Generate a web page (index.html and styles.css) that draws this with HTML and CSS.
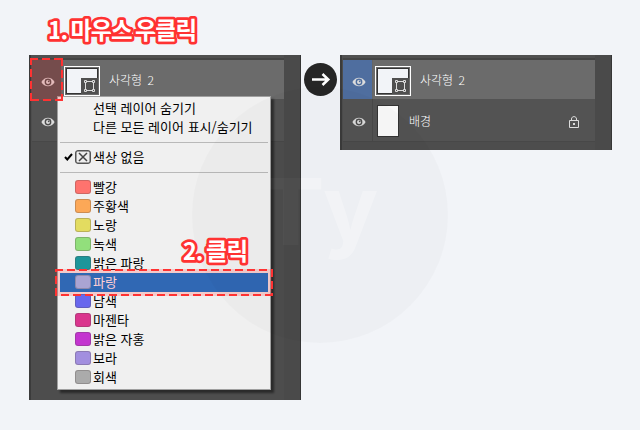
FILE: index.html
```html
<!DOCTYPE html>
<html lang="ko">
	<head>
		<meta charset="utf-8">
		<title>레이어 색상</title>
		<link rel="stylesheet" href="styles.css">
	</head>
	<body>
		<svg class="symbols" width="0" height="0">
			<symbol id="eye" viewBox="0 0 14 10">
				<path d="M0.4 5C3.4-.8 10.6-.8 13.6 5C10.6 10.8 3.4 10.8.4 5Z" fill="#dcdcdc"/>
				<circle cx="7" cy="5" r="3.4" fill="var(--pupil)"/>
				<circle cx="7" cy="5" r="2" fill="#dcdcdc"/>
				<circle cx="7.7" cy="4.3" r=".9" fill="var(--pupil)"/>
			</symbol>
			<symbol id="shape" viewBox="0 0 17 16">
				<path d="M0 0H17V16H0Z" fill="#505050"/>
				<path d="M4.5 5V11M12.5 5V11M6 3.5H11M6 12.5H11M3.5 2.5h2v2h-2zM11.5 2.5h2v2h-2zM3.5 11.5h2v2h-2zM11.5 11.5h2v2h-2z" fill="none" stroke="#ddd"/>
			</symbol>
		</svg>

		<div class="container">
			<!-- 왼쪽 패널 -->
			<div class="panel panel-left">
				<div class="list">
					<div class="layer active">
						<div class="eye"><svg width="14" height="10"><use href="#eye"/></svg></div>
						<div class="thumb"><svg width="17" height="16"><use href="#shape"/></svg></div>
						<span class="name">사각형 2</span>
					</div>
					<div class="layer">
						<div class="eye"><svg width="14" height="10"><use href="#eye"/></svg></div>
					</div>
				</div>
				<div class="scroll"></div>
			</div>

			<svg class="arrow" width="33" height="33" viewBox="0 0 33 33">
				<circle cx="16.5" cy="16.5" r="16.5" fill="#262626"/>
				<path d="M8 16.5H24M18.5 11L24.3 16.5L18.5 22" fill="none" stroke="#fff" stroke-width="2.5"/>
			</svg>

			<!-- 오른쪽 패널 -->
			<div class="panel panel-right">
				<div class="list">
					<div class="layer active blue">
						<div class="eye"><svg width="14" height="10"><use href="#eye"/></svg></div>
						<div class="thumb"><svg width="17" height="16"><use href="#shape"/></svg></div>
						<span class="name">사각형 2</span>
					</div>
					<div class="layer">
						<div class="eye"><svg width="14" height="10"><use href="#eye"/></svg></div>
						<div class="thumb-bg"></div>
						<span class="name">배경</span>
						<svg class="lock" width="10" height="12" viewBox="0 0 10 12">
							<path d="M.5 4.5H9.5V11.5H.5ZM2.5 4.5V3C2.5-.2 7.5-.2 7.5 3V4.5" fill="none" stroke="#ddd"/>
							<path d="M4 7H6V9H4Z" fill="#ddd"/>
						</svg>
					</div>
				</div>
				<div class="scroll"></div>
			</div>
		</div>

		<!-- 우클릭 메뉴 -->
		<div class="menu">
			<div class="item"><span>선택 레이어 숨기기</span></div>
			<div class="item"><span>다른 모든 레이어 표시/숨기기</span></div>
			<div class="line"></div>
			<div class="item">
				<svg class="check" width="9" height="8" viewBox="0 0 9 8"><path d="M1 4L3.3 6.5L8 1" fill="none" stroke="#000" stroke-width="2"/></svg>
				<svg class="none" width="16" height="14" viewBox="0 0 16 14">
					<rect x=".75" y=".75" width="14.5" height="12.5" rx="2" fill="#eee" stroke="#555" stroke-width="1.5"/>
					<path d="M4 3L12 11M12 3L4 11" stroke="#444" stroke-width="1.5"/>
				</svg>
				<span>색상 없음</span>
			</div>
			<div class="line"></div>
			<div class="item"><i class="color red"></i><span>빨강</span></div>
			<div class="item"><i class="color orange"></i><span>주황색</span></div>
			<div class="item"><i class="color yellow"></i><span>노랑</span></div>
			<div class="item"><i class="color green"></i><span>녹색</span></div>
			<div class="item"><i class="color teal"></i><span>밝은 파랑</span></div>
			<div class="item selected"><i class="color pale"></i><span>파랑</span></div>
			<div class="item"><i class="color indigo"></i><span>남색</span></div>
			<div class="item"><i class="color magenta"></i><span>마젠타</span></div>
			<div class="item"><i class="color fuchsia"></i><span>밝은 자홍</span></div>
			<div class="item"><i class="color violet"></i><span>보라</span></div>
			<div class="item"><i class="color gray"></i><span>회색</span></div>
		</div>

		<!-- 워터마크 -->
		<div class="mark"><span class="mark-t">T</span><span class="mark-y">y</span></div>

		<!-- 설명 표시 -->
		<svg class="guide" width="640" height="430">
			<rect x="31" y="59" width="31" height="41" fill="#ff3232" fill-opacity=".2"/>
			<path d="M30 59H63M62 58V101M63 100H30M31 101V58" class="dash"/>
			<path d="M55 270H273M272 269V296M273 295H55M56 296V269" class="dash"/>
			<text class="step" x="48" y="39" textLength="149">1. 마우스 우클릭</text>
			<text class="step" x="183" y="260" textLength="65">2. 클릭</text>
		</svg>
	</body>
</html>
```
FILE: styles.css
```css
* {
	margin: 0;
	padding: 0;
	box-sizing: border-box;
}
body {
	width: 640px;
	height: 430px;
	position: relative;
	overflow: hidden;
	background: #f2f4f8;
	font-family: "Noto Sans CJK KR", sans-serif;
}
svg {
	display: block;
	flex: none;
}
.symbols {
	position: absolute;
}
.container {
	display: flex;
	align-items: flex-start;
	padding: 55px 28px 0 29px;
}
.panel {
	width: 272px;
	display: flex;
	background: #4d4d4d;
	border-left: 2px solid #3b3b3b;
	border-right: 1px solid #363636;
}
.panel-left {
	height: 345px;
}
.panel-right {
	height: 95px;
}
.list {
	width: 253px;
	border-top: 3px solid #505050;
	padding-left: 1px;
}
.scroll {
	flex: 1;
	background: #4a4a4a;
}
.layer {
	height: 43px;
	display: flex;
	align-items: center;
	background: #535353;
	border-bottom: 1px solid #484848;
	--pupil: #4d4d4d;
}
.layer.active {
	height: 41px;
	background: #6b6b6b;
	border-top: 2px solid #444;
	border-bottom: 0;
}
.eye {
	width: 30px;
	height: 100%;
	display: flex;
	align-items: center;
	padding-left: 9px;
	padding-top: 4px;
	border-right: 1px solid #494949;
	background: #535353;
}
.active .eye {
	border-right-color: #666;
}
.blue .eye {
	background: #4f6e9f;
	--pupil: #4f6e9f;
}
.thumb {
	width: 36px;
	height: 30px;
	margin: 2px 9px 0 2px;
	padding: 1px;
	display: flex;
	justify-content: flex-end;
	align-items: flex-end;
	border: 1px solid #fff;
	background: #f2f4f8;
	box-shadow: inset 0 0 0 1px #6b6b6b, inset 0 0 0 2px #333;
}
.thumb-bg {
	width: 22px;
	height: 32px;
	margin: 2px 10px 0 4px;
	border: 1px solid #333;
	background: #fafafa;
}
.name {
	flex: 1;
	padding-top: 1px;
	font-size: 12px;
	font-weight: 300;
	line-height: 18px;
	color: #fff;
	word-spacing: 2px;
}
.lock {
	margin: 4px 16px 0 0;
}
.arrow {
	margin: 8px 3px 0;
}
.menu {
	position: absolute;
	left: 57px;
	top: 96px;
	width: 214px;
	height: 294px;
	padding: 2px;
	border: 1px solid #a0a0a0;
	background: #f0f0f0;
	box-shadow: 3px 3px 2px rgba(0,0,0,0.45);
}
.item {
	height: 19px;
	display: flex;
	align-items: center;
	position: relative;
	padding-left: 33px;
	font-size: 13px;
	line-height: 19px;
	color: #000;
	white-space: nowrap;
}
.item span {
	padding-bottom: 2px;
}
.item.selected {
	background: #3068b4;
	color: #ffcfd3;
	box-shadow: 0 0 0 4px rgba(255,50,50,0.2);
}
.line {
	height: 1px;
	margin: 5px 0;
	background: #b9b9b9;
}
.color, .none {
	width: 16px;
	height: 14px;
	margin: -1px 2px 0 -18px;
	border-radius: 3px;
}
.color {
	border: 1px solid rgba(80,70,70,0.28);
}
.check {
	position: absolute;
	left: 4px;
	top: 5px;
}
.red { background-color: #ff736e; }
.orange { background-color: #fca857; }
.yellow { background-color: #e3dc60; }
.green { background-color: #92df7c; }
.teal { background-color: #1d969a; }
.pale { background-color: #aaa4d3; }
.indigo { background-color: #6867ed; }
.magenta { background-color: #da358e; }
.fuchsia { background-color: #c334cf; }
.violet { background-color: #a28fdf; }
.gray { background-color: #ababab; }
.mark {
	position: absolute;
	left: 192px;
	top: 87px;
	width: 256px;
	height: 256px;
	border-radius: 50%;
	background: rgba(0,0,0,0.02);
	font-family: Inter, sans-serif;
	font-size: 92px;
	font-weight: 700;
	line-height: 112px;
	display: flex;
	padding: 69px 0 0 68px;
}
.mark-t {
	width: 63px;
	transform: scaleX(1.12);
	/* 어두운 패널 위에서는 더 연하게 */
	background: linear-gradient(90deg, rgba(255,255,255,0.03) 40px, rgba(255,255,255,0.28) 40px);
	-webkit-background-clip: text;
	background-clip: text;
	color: transparent;
}
.mark-y {
	color: rgba(255,255,255,0.28);
	margin-top: -4px;
}
.guide {
	position: absolute;
	left: 0;
	top: 0;
}
.dash {
	fill: none;
	stroke: #ff3232;
	stroke-width: 2;
	stroke-dasharray: 8 4;
}
.step {
	font-size: 23.5px;
	font-weight: 700;
	word-spacing: -1.5px;
	fill: #fff;
	stroke: #ff3232;
	stroke-width: 5.5;
	stroke-linejoin: round;
	paint-order: stroke;
}
```
